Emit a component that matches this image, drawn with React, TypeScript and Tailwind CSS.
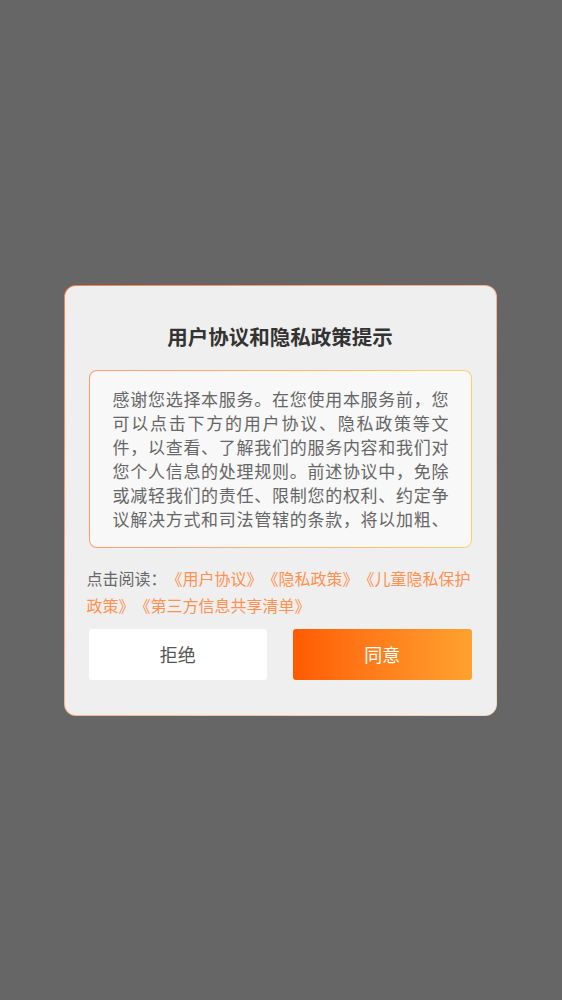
const FONT = "font-['Noto_Sans_CJK_SC','Noto_Sans',sans-serif]";

const LINKS = ['《用户协议》', '《隐私政策》', '《儿童隐私保护政策》', '《第三方信息共享清单》'];

const BODY =
  '感谢您选择本服务。在您使用本服务前，您可以点击下方的用户协议、隐私政策等文件，以查看、了解我们的服务内容和我们对您个人信息的处理规则。前述协议中，免除或减轻我们的责任、限制您的权利、约定争议解决方式和司法管辖的条款，将以加粗、下划线等形式提示您重点阅读。如您同意，请点击“同意”开始接受我们的服务。';

export default function App() {
  return (
    <div
      className={`min-h-[1000px] w-full bg-[#666666] flex items-center justify-center [text-spacing-trim:space-all] ${FONT}`}
    >
      {/* Dialog with gradient border */}
      <div className="w-[433px] h-[431px] -translate-x-px rounded-[12px] p-px bg-gradient-to-br from-[#ff7d45] via-[#f8b48c] to-[#f3dcc4]">
        <div className="h-full rounded-[11px] bg-[#efefef] px-6 pt-[36px] pb-9 flex flex-col">
          <h2 className="text-center text-[20.5px] leading-[28px] font-semibold text-[#333333]">
            用户协议和隐私政策提示
          </h2>

          {/* Scrollable content box */}
          <div className="mt-[20px] rounded-[8px] p-px bg-gradient-to-r from-[#ff9a70] to-[#ffd06a]">
            <div className="h-[176px] rounded-[7px] bg-[#f8f8f8] pl-[23px] pr-[22px] pt-4">
              <p className="h-[144px] overflow-hidden text-[17px] leading-[24px] text-[#666666] text-justify">
                {BODY}
              </p>
            </div>
          </div>

          {/* Links */}
          <p className="-ml-[2px] -mr-[2px] mt-[17px] text-[16px] leading-[27px] text-[#666666]">
            点击阅读：
            {LINKS.map((l) => (
              <span key={l} className="text-[#ff9150]">
                {l}
              </span>
            ))}
          </p>

          {/* Actions */}
          <div className="mt-[10px] flex gap-[26px]">
            <button className="flex-1 h-[51px] rounded-[3px] bg-white text-[18px] text-[#555555]">拒绝</button>
            <button className="flex-1 h-[51px] rounded-[3px] bg-gradient-to-r from-[#ff5a00] to-[#ffa12e] text-[18px] text-white">
              同意
            </button>
          </div>
        </div>
      </div>
    </div>
  );
}
